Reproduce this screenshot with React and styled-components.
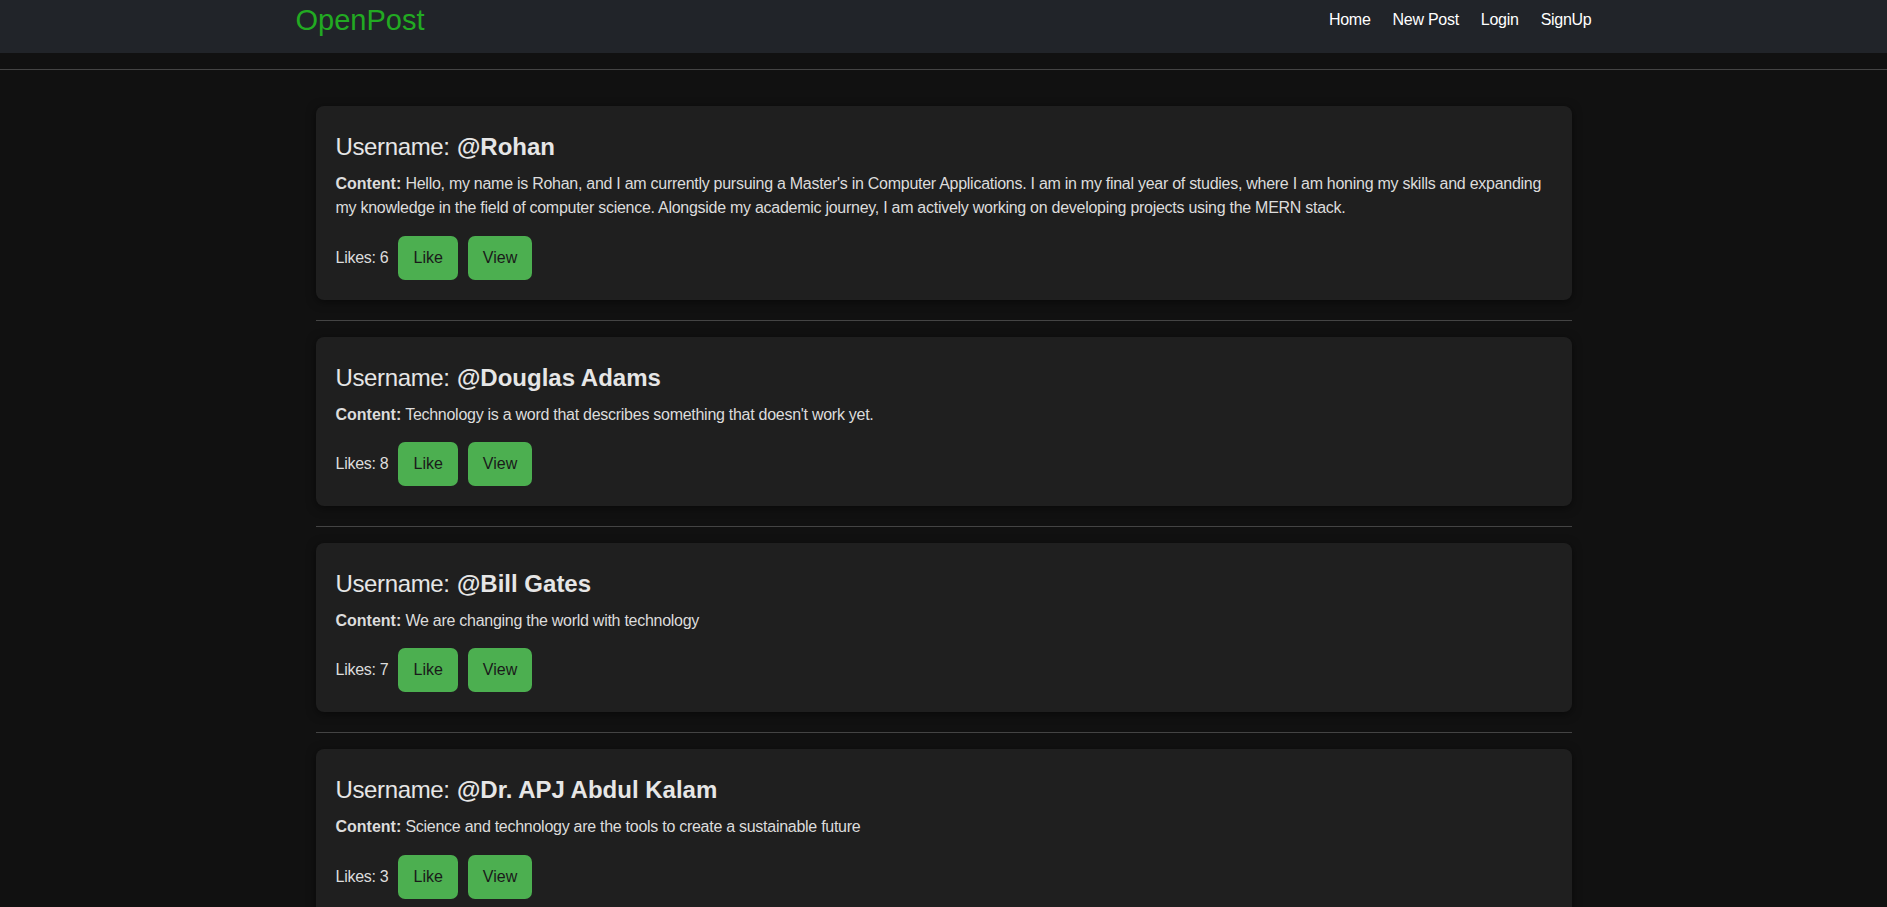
import React from "react";
import styled, { createGlobalStyle } from "styled-components";

const GlobalStyle = createGlobalStyle`
  * { box-sizing: border-box; }
  html, body { margin: 0; padding: 0; }
  body {
    background: #111111;
    color: #e0e0e0;
    font-family: "Liberation Sans", Arial, sans-serif;
    font-size: 16px;
  }
`;

const NavBar = styled.nav`
  background: #212429;
  height: 53px;
`;

const NavInner = styled.div`
  max-width: 1320px;
  margin: 0 auto;
  padding: 0 12px;
  height: 100%;
  display: flex;
  align-items: flex-start;
  justify-content: space-between;
`;

const Brand = styled.a`
  color: #22aa22;
  font-size: 29px;
  line-height: 34px;
  margin-top: 3px;
  text-decoration: none;
`;

const NavLinks = styled.div`
  display: flex;
  gap: 22px;
  margin-top: 10px;
`;

const NavLink = styled.a`
  color: #ffffff;
  font-size: 16px;
  line-height: 20px;
  letter-spacing: -0.017em;
  text-decoration: none;
`;

const Rule = styled.hr`
  border: 0;
  border-top: 1px solid #444444;
  margin: ${(p) => p.$m || "0"};
`;

const Feed = styled.main`
  max-width: 1320px;
  margin: 0 auto;
  padding: 36px 32px 0;
  display: flex;
  flex-direction: column;
`;

const Card = styled.article`
  background: #1f1f1f;
  border-radius: 8px;
  padding: 20px;
  box-shadow: 0 2px 10px rgba(0, 0, 0, 0.5);
`;

const Title = styled.h3`
  margin: 7px 0 10px;
  font-size: 24px;
  line-height: 28.8px;
  font-weight: 400;
  letter-spacing: -0.015em;
  color: #e6e6e6;
`;

const Handle = styled.strong`
  font-weight: 700;
  letter-spacing: normal;
  margin-left: 1px;
`;

const Content = styled.p`
  margin: 0 0 15px;
  font-size: 16px;
  line-height: 24.5px;
  letter-spacing: -0.017em;
  color: #dcdcdc;
`;

const Label = styled.strong`
  font-weight: 700;
  letter-spacing: normal;
`;

const Actions = styled.div`
  display: flex;
  align-items: center;
  gap: 10px;
`;

const Likes = styled.span`
  font-size: 16px;
  letter-spacing: -0.017em;
  color: #dcdcdc;
`;

const Button = styled.button`
  background: #4caf50;
  color: #1a1a1a;
  border: 0;
  border-radius: 7px;
  padding: 10px 15px;
  font-family: "Liberation Sans", Arial, sans-serif;
  font-size: 16px;
  line-height: 24px;
  cursor: pointer;
`;

const posts = [
  {
    user: "Rohan",
    content:
      "Hello, my name is Rohan, and I am currently pursuing a Master's in Computer Applications. I am in my final year of studies, where I am honing my skills and expanding my knowledge in the field of computer science. Alongside my academic journey, I am actively working on developing projects using the MERN stack.",
    likes: 6,
  },
  {
    user: "Douglas Adams",
    content: "Technology is a word that describes something that doesn't work yet.",
    likes: 8,
  },
  {
    user: "Bill Gates",
    content: "We are changing the world with technology",
    likes: 7,
  },
  {
    user: "Dr. APJ Abdul Kalam",
    content: "Science and technology are the tools to create a sustainable future",
    likes: 3,
  },
];

export default function App() {
  return (
    <>
      <GlobalStyle />
      <NavBar>
        <NavInner>
          <Brand href="#">OpenPost</Brand>
          <NavLinks>
            <NavLink href="#">Home</NavLink>
            <NavLink href="#">New Post</NavLink>
            <NavLink href="#">Login</NavLink>
            <NavLink href="#">SignUp</NavLink>
          </NavLinks>
        </NavInner>
      </NavBar>
      <Rule $m="16px 0 0" />
      <Feed>
        {posts.map((p) => (
          <React.Fragment key={p.user}>
            <Card>
              <Title>
                Username: <Handle>@{p.user}</Handle>
              </Title>
              <Content>
                <Label>Content:</Label> {p.content}
              </Content>
              <Actions>
                <Likes>Likes: {p.likes}</Likes>
                <Button>Like</Button>
                <Button>View</Button>
              </Actions>
            </Card>
            <Rule $m="20px 0 16px" />
          </React.Fragment>
        ))}
      </Feed>
    </>
  );
}
